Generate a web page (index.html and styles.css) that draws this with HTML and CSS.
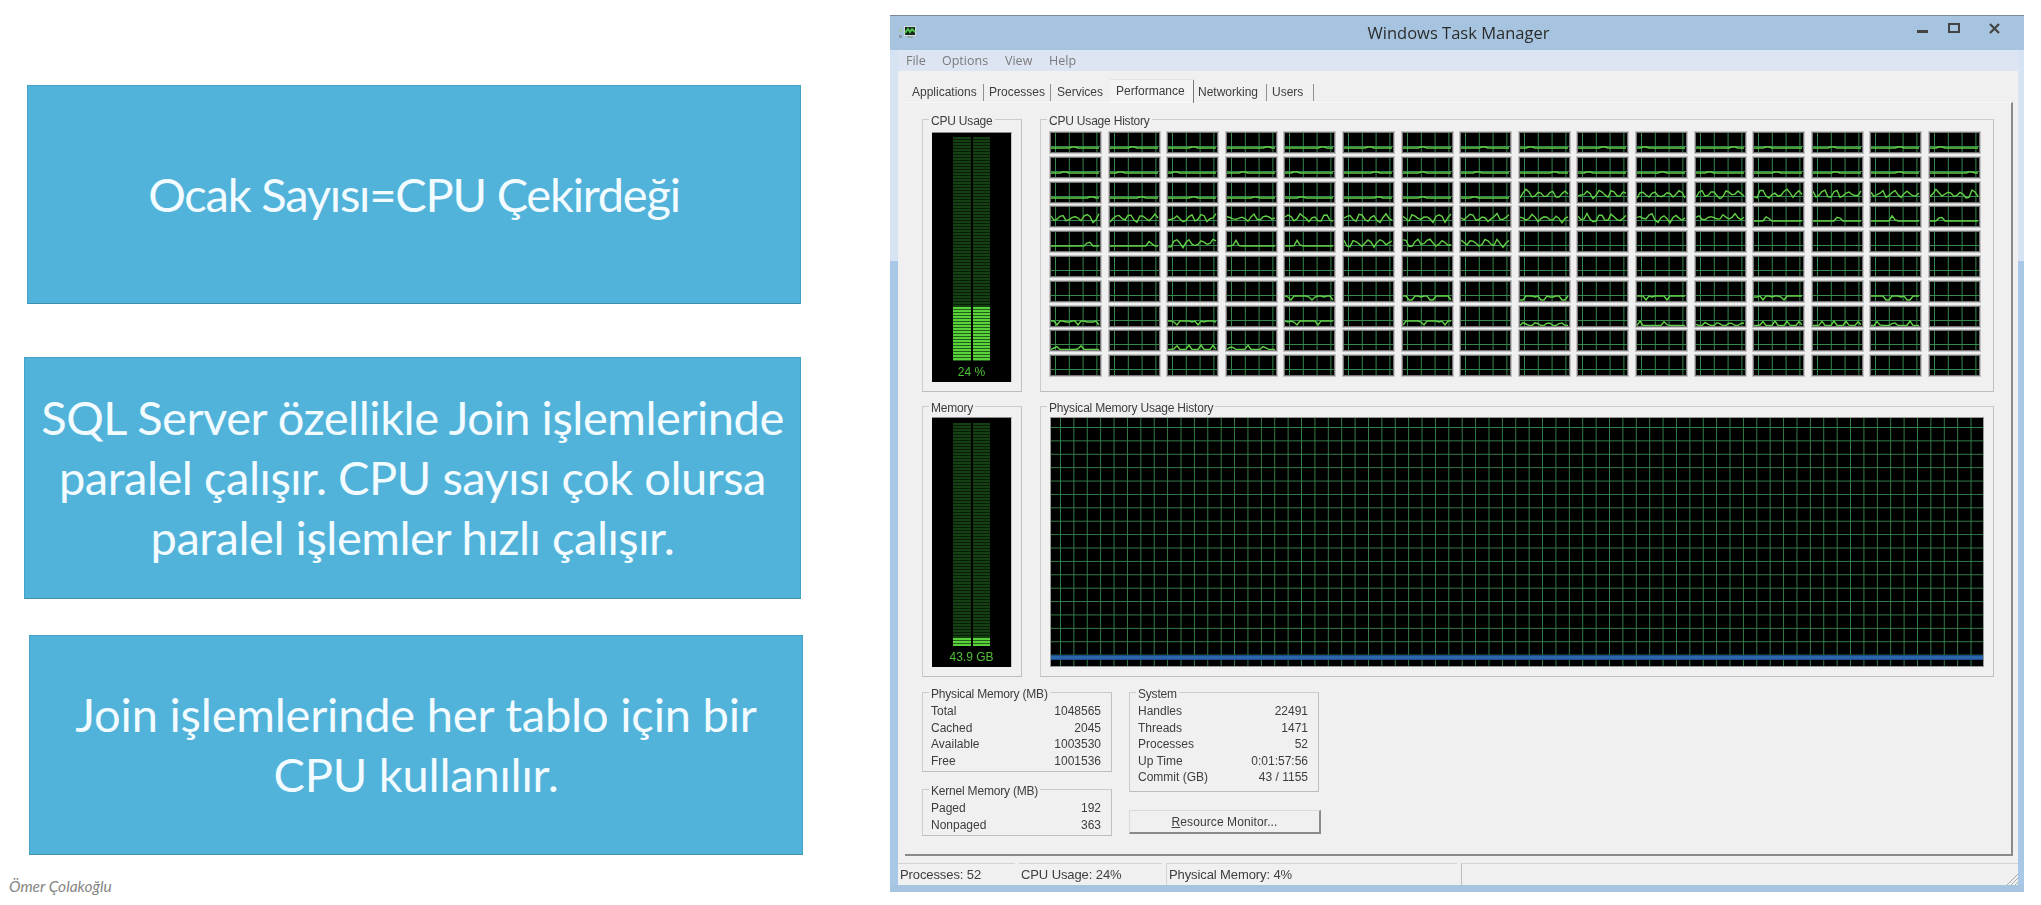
FILE: index.html
```html
<!DOCTYPE html>
<html lang="en">
<head>
    <meta charset="UTF-8">
    <meta name="viewport" content="width=device-width, initial-scale=1.0">
    <title>Ocak Sayısı</title>
    <link rel="stylesheet" href="styles.css">
</head>
<body>
    <div class="page">
        <div class="notes">
            <div class="card card-first">Ocak Sayısı=CPU Çekirdeği</div>
            <div class="card card-second">SQL Server özellikle Join işlemlerinde<br>paralel çalışır. CPU sayısı çok olursa<br>paralel işlemler hızlı çalışır.</div>
            <div class="card card-third">Join işlemlerinde her tablo için bir<br>CPU kullanılır.</div>
            <div class="author">Ömer Çolakoğlu</div>
        </div>

        <div class="window">
            <div class="titlebar">
                <svg class="app-icon" width="17" height="15" viewBox="0 0 17 15">
                    <rect x="5" y="1" width="12" height="10" fill="#d5dce0"/>
                    <rect x="6" y="2" width="10" height="8" fill="#16281c"/>
                    <path d="M6 8 L9 4 L11 7 L13 4 L16 7" stroke="#4cc04a" stroke-width="2" fill="none"/>
                    <rect x="8" y="11" width="6" height="2" fill="#9aa7ad"/>
                    <rect x="0" y="4" width="3" height="3" fill="#9fc7a0"/>
                    <rect x="0" y="10" width="3" height="3" fill="#8a99a3"/>
                </svg>
                <div class="title">Windows Task Manager</div>
                <svg class="win-buttons" width="83" height="12" viewBox="0 0 83 12">
                    <rect x="0" y="7" width="11" height="3" fill="#444"/>
                    <rect x="32" y="1" width="10" height="8" fill="none" stroke="#444" stroke-width="2"/>
                    <path d="M73 1 L82 10 M82 1 L73 10" stroke="#444" stroke-width="2.2"/>
                </svg>
            </div>
            <div class="menu">
                <span>File</span>
                <span>Options</span>
                <span>View</span>
                <span>Help</span>
            </div>
            <div class="client">
                <div class="tabs">
                    <div class="tab tab-apps">Applications</div>
                    <div class="tab tab-procs">Processes</div>
                    <div class="tab tab-services">Services</div>
                    <div class="tab tab-active">Performance</div>
                    <div class="tab tab-net">Networking</div>
                    <div class="tab tab-users">Users</div>
                </div>
                <div class="sheet">
                    <div class="graphs">
                        <fieldset class="group">
                            <legend>CPU Usage</legend>
                            <div class="meter">
                                <div class="meter-bar">
                                    <div class="meter-col"><div class="meter-lit" style="height: 24%"></div></div>
                                    <div class="meter-col"><div class="meter-lit" style="height: 24%"></div></div>
                                </div>
                                <div class="meter-label">24 %</div>
                            </div>
                        </fieldset>
                        <fieldset class="group">
                            <legend>CPU Usage History</legend>
                            <div class="cpu-grid" id="cpuGrid"></div>
                        </fieldset>
                        <fieldset class="group group-low">
                            <legend>Memory</legend>
                            <div class="meter meter-mem">
                                <div class="meter-bar">
                                    <div class="meter-col"><div class="meter-lit" style="height: 3.5%"></div></div>
                                    <div class="meter-col"><div class="meter-lit" style="height: 3.5%"></div></div>
                                </div>
                                <div class="meter-label">43.9 GB</div>
                            </div>
                        </fieldset>
                        <fieldset class="group group-low">
                            <legend>Physical Memory Usage History</legend>
                            <div class="mem-graph"></div>
                        </fieldset>
                    </div>

                    <div class="lower">
                        <div class="lower-col">
                            <fieldset class="group stats stats-physical">
                                <legend>Physical Memory (MB)</legend>
                                <div class="stat"><span>Total</span><span>1048565</span></div>
                                <div class="stat"><span>Cached</span><span>2045</span></div>
                                <div class="stat"><span>Available</span><span>1003530</span></div>
                                <div class="stat"><span>Free</span><span>1001536</span></div>
                            </fieldset>
                            <fieldset class="group stats stats-kernel">
                                <legend>Kernel Memory (MB)</legend>
                                <div class="stat"><span>Paged</span><span>192</span></div>
                                <div class="stat"><span>Nonpaged</span><span>363</span></div>
                            </fieldset>
                        </div>
                        <div class="lower-col">
                            <fieldset class="group stats stats-system">
                                <legend>System</legend>
                                <div class="stat"><span>Handles</span><span>22491</span></div>
                                <div class="stat"><span>Threads</span><span>1471</span></div>
                                <div class="stat"><span>Processes</span><span>52</span></div>
                                <div class="stat"><span>Up Time</span><span>0:01:57:56</span></div>
                                <div class="stat"><span>Commit (GB)</span><span>43 / 1155</span></div>
                            </fieldset>
                            <button class="monitor-btn"><u>R</u>esource Monitor...</button>
                        </div>
                    </div>
                </div>
                <div class="statusbar">
                    <div class="pane pane-procs">Processes: 52</div>
                    <div class="pane pane-cpu">CPU Usage: 24%</div>
                    <div class="pane pane-mem">Physical Memory: 4%</div>
                    <div class="pane pane-rest">
                        <svg class="grip" width="11" height="12" viewBox="0 0 11 12">
                            <path d="M0 12 L11 1 M4 12 L11 5 M8 12 L11 9" stroke="#a9a9a9" stroke-width="1"/>
                        </svg>
                    </div>
                </div>
            </div>
        </div>
    </div>
    <script src="script.js"></script>
</body>
</html>
```

FILE: styles.css
```css
body {
    margin: 0;
    background: white;
    overflow: hidden;
}
.page {
    display: flex;
    width: 2041px;
    height: 905px;
}

/* left side, the slide notes */
.notes {
    width: 890px;
    padding-top: 85px;
    box-sizing: border-box;
    font-family: "Lato", sans-serif;
}
.card {
    display: flex;
    align-items: center;
    justify-content: center;
    text-align: center;
    box-sizing: border-box;
    padding-bottom: 2px;
    background: #51b3d9;
    border: 1px solid #47a3c6;
    border-bottom-color: #3c8fae;
    color: #f2fbff;
    font-size: 47px;
    line-height: 60px;
    letter-spacing: -0.47px;
}
.card-first {
    width: 774px;
    height: 219px;
    margin-left: 27px;
    letter-spacing: -1.2px;
}
.card-second {
    width: 777px;
    height: 242px;
    margin-left: 24px;
    margin-top: 53px;
}
.card-third {
    width: 774px;
    height: 220px;
    margin-left: 29px;
    margin-top: 36px;
    letter-spacing: -0.2px;
}
.author {
    margin: 22px 0 0 9px;
    font-size: 15.5px;
    font-style: italic;
    color: #858585;
}

/* right side, the task manager picture */
.window {
    width: 1134px;
    height: 877px;
    margin-top: 15px;
    padding: 0 6px 7px 8px;
    box-sizing: border-box;
    border-top: 1px solid #7d8a96;
    background: linear-gradient(180deg, #a6c4df 0, #a6c4df 34px, #d5e3f3 34px, #d5e3f3 245px, #a9c7e7 245px, #a9c7e7 869px, #a6c4df 869px);
    font-family: "Liberation Sans", sans-serif;
    font-size: 12px;
    color: #3d3d3d;
    filter: blur(0.45px);
}
.titlebar {
    display: flex;
    height: 34px;
    margin: 0 -6px 0 -8px;
    padding: 0 24px 0 9px;
}
.app-icon {
    margin-top: 9px;
}
.title {
    flex: 1;
    text-align: center;
    line-height: 33px;
    padding-left: 84px;
    font-family: "Open Sans", sans-serif;
    font-size: 16.5px;
    color: #2c2c2c;
}
.win-buttons {
    margin-top: 7px;
}
.menu {
    display: flex;
    height: 21px;
    align-items: center;
    padding-left: 8px;
    background: #dde5f3;
    font-family: "Open Sans", sans-serif;
    font-size: 12.5px;
    color: #7b7b7b;
}
.menu span:nth-child(1) { width: 36px; }
.menu span:nth-child(2) { width: 63px; }
.menu span:nth-child(3) { width: 44px; }

.client {
    height: 814px;
    background: #f0f0f0;
}
.tabs {
    display: flex;
    align-items: flex-end;
    height: 31px;
    padding-left: 7px;
}
.tab {
    height: 20px;
    line-height: 20px;
    box-sizing: border-box;
    position: relative;
}
/* the little divider between two tabs */
.tab::after {
    content: "";
    position: absolute;
    right: 0;
    top: 2px;
    height: 17px;
    border-right: 1px solid #8f8f8f;
}
.tab-apps { width: 79px; padding-left: 7px; }
.tab-procs { width: 67px; padding-left: 5px; }
.tab-services { width: 59px; padding-left: 6px; }
.tab-services::after { display: none; }
.tab-active {
    width: 84px;
    height: 23px;
    line-height: 22px;
    padding-left: 6px;
    background: #f4f4f4;
    border-top: 1px solid #e4e4e4;
}
.tab-active::after { top: 0; height: 23px; border-right-color: #777; }
.tab-net { width: 73px; padding-left: 4px; }
.tab-users { width: 47px; padding-left: 5px; }

.sheet {
    height: 754px;
    margin: 0 5px 7px 7px;
    padding: 7px 0 0 17px;
    box-sizing: border-box;
    border-top: 1px solid #f8f8f8;
    border-right: 2px solid #8a8a8a;
    border-bottom: 2px solid #8a8a8a;
}
.graphs {
    display: grid;
    grid-template-columns: 100px 954px;
    grid-template-rows: 282px 280px;
    column-gap: 18px;
    row-gap: 5px;
}
.group {
    margin: 0;
    min-width: 0;
    padding: 4px 9px 0;
    box-sizing: border-box;
    border: 1px solid #cbcbcb;
    border-right-color: #c0c0c0;
    border-bottom-color: #bdbdbd;
}
.group-low {
    padding-top: 2px;
}
.group legend {
    margin-left: -3px;
    padding: 4px 2px 0;
    line-height: 14px;
    letter-spacing: -0.2px;
    color: #3d3d3d;
}
.stats legend {
    margin-left: -2px;
}

.meter {
    display: flex;
    flex-direction: column;
    align-items: center;
    height: 250px;
    padding-top: 4px;
    box-sizing: border-box;
    background: black;
    border-top: 1px solid #8c8c8c;
    border-right: 1px solid #c4c4c4;
}
.meter-bar {
    display: flex;
    gap: 2px;
    width: 37px;
    height: 224px;
}
.meter-mem .meter-bar {
    height: 223px;
    margin-top: 1px;
}
.meter-col {
    flex: 1;
    display: flex;
    align-items: flex-end;
    background: repeating-linear-gradient(180deg, #133f13 0, #133f13 2px, #081c08 2px, #081c08 3px);
}
.meter-lit {
    width: 100%;
    background: repeating-linear-gradient(180deg, #5ad23a 0, #5ad23a 2px, #235f1c 2px, #235f1c 3px);
}
.meter-label {
    flex: 1;
    display: flex;
    align-items: center;
    color: #4fc038;
}

.cpu-grid {
    display: grid;
    grid-template-columns: repeat(16, 51px);
    grid-auto-rows: 21px;
    column-gap: 7.6px;
    row-gap: 3.8px;
}
.cpu-cell {
    box-sizing: border-box;
    border: 1px solid #777;
    box-shadow: 0 0 0 1px #c4c4c4;
    background-color: black;
    background-image:
        linear-gradient(90deg, #368a4e 1px, transparent 1px),
        linear-gradient(180deg, transparent 13px, #368a4e 13px, #368a4e 14px, transparent 14px);
    background-size: 13.8px 100%, 100% 100%;
    background-position: 4px 0, 0 0;
}
.cpu-cell svg {
    display: block;
}
.mem-graph {
    height: 250px;
    box-sizing: border-box;
    border: 1px solid #9a9a9a;
    background-color: black;
    background-image:
        linear-gradient(180deg, transparent 237px, #10306a 237px, #2b66ad 238px, #2b66ad 241px, #10306a 242px, transparent 242px),
        linear-gradient(90deg, #348049 1px, transparent 1px),
        linear-gradient(180deg, #348049 1px, transparent 1px);
    background-size: 100% 100%, 13.4px 100%, 100% 13.4px;
    background-position: 0 0, 9px 0, 0 9px;
}

.lower {
    display: flex;
    gap: 16px;
    margin-top: 6px;
}
.lower-col {
    width: 191px;
}
.stats {
    width: 190px;
    padding: 2px 10px 0 8px;
}
.stats-physical { height: 89px; }
.stats-kernel { height: 56px; margin-top: 8px; }
.stats-system { height: 109px; }
.stat {
    display: flex;
    justify-content: space-between;
    line-height: 16.6px;
}
.monitor-btn {
    display: block;
    width: 192px;
    height: 24px;
    margin-top: 18px;
    padding: 0;
    background: #f0f0f0;
    border: 1px solid #dadada;
    border-right: 2px solid #8a8a8a;
    border-bottom: 2px solid #8a8a8a;
    font-family: "Liberation Sans", sans-serif;
    font-size: 12px;
    letter-spacing: 0.1px;
    color: #3d3d3d;
}

.statusbar {
    display: flex;
    gap: 4px;
    height: 22px;
}
.pane {
    box-sizing: border-box;
    padding-left: 2px;
    line-height: 22px;
    font-size: 13px;
    letter-spacing: -0.1px;
    border-top: 1px solid #d4d4d4;
    position: relative;
}
.pane-procs { width: 117px; }
.pane-cpu { width: 143px; }
.pane-mem { width: 291px; border-left: 1px solid #d4d4d4; }
.pane-rest { flex: 1; border-left: 1px solid #bdbdbd; }
.grip {
    position: absolute;
    right: 0;
    bottom: 0;
}
```

FILE: script.js
```js
// Which kind of trace each core of the history grid shows
// f flat, w wiggle, b flat with one bump, p plateau, s spikes, . nothing
const cpuRows = [
    "ffffffffffffffff",
    "ffffffffffffffff",
    "ffffffffwwwwwwww",
    "wwwwwwwwwwwwbbbb",
    "bbwbbwww........",
    "................",
    "....p.p.p.p.p.p.",
    "p.p.p.p.s.sssss.",
    "s.ss............",
    "................"
];

let seed = 17;
function rnd() {
    seed = (seed * 1103 + 12345) % 65536;
    return seed / 65536;
}

function tracePoints(kind) {
    const pts = [];
    const bumpAt = 6 + rnd() * 36;
    const spikes = 2 + Math.floor(rnd() * 3);
    for (let x = 0; x <= 49; x += 3) {
        let y = 15;
        if (kind === "f") {
            y = 15 - (Math.abs(x - bumpAt) < 3 ? 1 : 0);
        } else if (kind === "w") {
            y = 11 + Math.sin(x * 0.5 + bumpAt) * 3 + (rnd() - 0.5) * 4;
        } else if (kind === "b") {
            y = 14 - Math.max(0, 6 - Math.abs(x - bumpAt) * 1.8);
        } else if (kind === "p") {
            y = (x + Math.floor(bumpAt)) % 21 < 5 ? 18 : 14 + (rnd() > 0.8 ? 1 : 0);
        } else if (kind === "s") {
            const pitch = 49 / spikes;
            const d = Math.abs(((x + bumpAt) % pitch) - pitch / 2);
            y = d < 3 ? 14 + d * 1.5 : 18.5;
        }
        pts.push(x + "," + y.toFixed(1));
    }
    return pts.join(" ");
}

const grid = document.getElementById("cpuGrid");
cpuRows.forEach(function (row) {
    for (const kind of row) {
        const cell = document.createElement("div");
        cell.className = "cpu-cell";
        if (kind !== ".") {
            cell.innerHTML = '<svg width="49" height="19" viewBox="0 0 49 19"><polyline points="' +
                tracePoints(kind) + '" fill="none" stroke="#62d046" stroke-width="1.4"/></svg>';
        }
        grid.appendChild(cell);
    }
});
```
